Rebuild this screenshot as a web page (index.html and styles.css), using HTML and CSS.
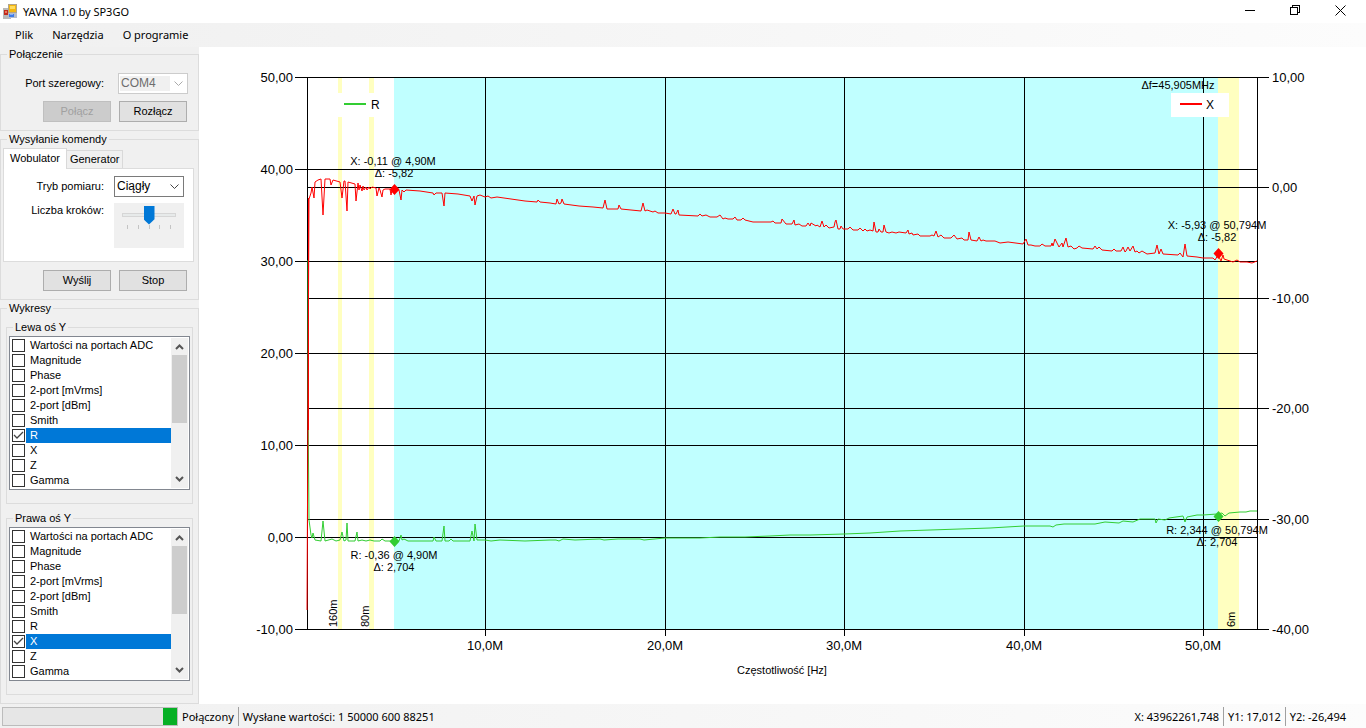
FILE: index.html
```html
<!DOCTYPE html>
<html lang="pl">
<head>
    <meta charset="UTF-8">
    <meta name="viewport" content="width=device-width, initial-scale=1.0">
    <title>YAVNA 1.0 by SP3GO</title>
    <link rel="stylesheet" href="styles.css">
</head>
<body>
    <header class="titlebar">
        <svg class="app-icon" width="16" height="16" viewBox="0 0 16 16">
            <rect x="0" y="4" width="8" height="11" fill="#b9b9b9"/>
            <rect x="1" y="6" width="5" height="5" fill="#c22a1b"/>
            <rect x="2" y="7" width="2" height="2" fill="#e8765f"/>
            <rect x="5" y="0" width="9" height="10" fill="#b0a48c"/>
            <rect x="6" y="1" width="7" height="7" fill="#f5b70f"/>
            <rect x="7" y="2" width="5" height="3" fill="#ffdc5e"/>
            <rect x="5" y="9" width="9" height="5" fill="#b5bccb"/>
            <rect x="6" y="10" width="5" height="3" fill="#3f7be8"/>
            <rect x="7" y="10" width="3" height="1" fill="#86aff5"/>
        </svg>
        <span class="title">YAVNA 1.0 by SP3GO</span>
        <div class="window-buttons">
            <button type="button" aria-label="Minimalizuj"><svg width="11" height="11"><path d="M0 5.5h10"/></svg></button>
            <button type="button" aria-label="Przywróć"><svg width="11" height="11"><path d="M0.5 2.5h7v7h-7zM2.5 2.5v-2h7v7h-2"/></svg></button>
            <button type="button" aria-label="Zamknij"><svg width="11" height="11"><path class="smooth" d="M0.5 0.5l10 10M10.5 0.5l-10 10"/></svg></button>
        </div>
    </header>
    <nav class="menu">
        <a href="#">Plik</a>
        <a href="#">Narzędzia</a>
        <a href="#">O programie</a>
    </nav>
    <div class="container">
        <aside>
            <fieldset class="connection">
                <legend>Połączenie</legend>
                <div class="row">
                    <label for="port">Port szeregowy:</label>
                    <span class="combo disabled">
                        <select id="port" disabled><option>COM4</option></select>
                        <svg width="9" height="6"><path d="M0.5 0.5l4 4 4-4"/></svg>
                    </span>
                </div>
                <div class="buttons">
                    <button type="button" class="btn" disabled>Połącz</button>
                    <button type="button" class="btn">Rozłącz</button>
                </div>
            </fieldset>

            <fieldset class="command">
                <legend>Wysyłanie komendy</legend>
                <div class="tabs" role="tablist">
                    <button type="button" class="tab active" role="tab" aria-selected="true">Wobulator</button>
                    <button type="button" class="tab" role="tab" aria-selected="false">Generator</button>
                </div>
                <div class="tab-page" role="tabpanel">
                    <div class="row">
                        <label for="mode">Tryb pomiaru:</label>
                        <span class="combo">
                            <select id="mode"><option>Ciągły</option></select>
                            <svg width="9" height="6"><path d="M0.5 0.5l4 4 4-4"/></svg>
                        </span>
                    </div>
                    <div class="row top">
                        <label for="steps">Liczba kroków:</label>
                        <div class="trackbar">
                            <input type="range" id="steps" min="0" max="4" value="2">
                            <div class="ticks"><i></i><i></i><i></i><i></i><i></i></div>
                        </div>
                    </div>
                </div>
                <div class="buttons">
                    <button type="button" class="btn">Wyślij</button>
                    <button type="button" class="btn">Stop</button>
                </div>
            </fieldset>

            <fieldset class="charts">
                <legend>Wykresy</legend>
                <fieldset class="axis">
                    <legend>Lewa oś Y</legend>
                    <div class="listbox">
                        <div class="items">
                            <label><input type="checkbox"><span>Wartości na portach ADC</span></label>
                            <label><input type="checkbox"><span>Magnitude</span></label>
                            <label><input type="checkbox"><span>Phase</span></label>
                            <label><input type="checkbox"><span>2-port [mVrms]</span></label>
                            <label><input type="checkbox"><span>2-port [dBm]</span></label>
                            <label><input type="checkbox"><span>Smith</span></label>
                            <label class="selected"><input type="checkbox" checked><span>R</span></label>
                            <label><input type="checkbox"><span>X</span></label>
                            <label><input type="checkbox"><span>Z</span></label>
                            <label><input type="checkbox"><span>Gamma</span></label>
                        </div>
                        <div class="scroll">
                            <svg width="9" height="6"><path d="M1 5l3.500-3.500L8 5"/></svg>
                            <div class="thumb"></div>
                            <svg width="9" height="6"><path d="M1 1l3.500 3.500L8 1"/></svg>
                        </div>
                    </div>
                </fieldset>
                <fieldset class="axis">
                    <legend>Prawa oś Y</legend>
                    <div class="listbox">
                        <div class="items">
                            <label><input type="checkbox"><span>Wartości na portach ADC</span></label>
                            <label><input type="checkbox"><span>Magnitude</span></label>
                            <label><input type="checkbox"><span>Phase</span></label>
                            <label><input type="checkbox"><span>2-port [mVrms]</span></label>
                            <label><input type="checkbox"><span>2-port [dBm]</span></label>
                            <label><input type="checkbox"><span>Smith</span></label>
                            <label><input type="checkbox"><span>R</span></label>
                            <label class="selected"><input type="checkbox" checked><span>X</span></label>
                            <label><input type="checkbox"><span>Z</span></label>
                            <label><input type="checkbox"><span>Gamma</span></label>
                        </div>
                        <div class="scroll">
                            <svg width="9" height="6"><path d="M1 5l3.500-3.500L8 5"/></svg>
                            <div class="thumb"></div>
                            <svg width="9" height="6"><path d="M1 1l3.500 3.500L8 1"/></svg>
                        </div>
                    </div>
                </fieldset>
            </fieldset>
        </aside>

        <main>
            <svg class="chart" viewBox="199 47 1167 656">
                <!-- amateur bands and the range between markers -->
                <g class="bands">
                    <rect class="ham" x="338" y="78" width="4" height="551"/>
                    <rect class="ham" x="369" y="78" width="5" height="551"/>
                    <rect class="range" x="394" y="78" width="824" height="551"/>
                    <rect class="ham" x="1218" y="78" width="21" height="551"/>
                </g>
                <g class="grid">
                    <path d="M307.500 77V630M485.500 77V636M665.500 77V636M844.500 77V636M1024.500 77V636M1203.500 77V636M1257.500 77V630"/>
                    <path d="M295 77.500H1269M295 169.500H1258M295 261.500H1258M295 353.500H1258M295 445.500H1258M295 537.500H1258M295 629.500H1269"/>
                    <path d="M307 187.500H1269M307 298.500H1269M307 408.500H1269M307 519.500H1269"/>
                </g>
                <!-- R -->
                <polyline class="line-r" points="308,260 308,400 309,520 311,535 312,538 313,533 315,540 321,541 323,521 325,541 332,539 336,541 340,540 342,532 344,541 346,540 347,523 348,541 355,541 357,532 358,541 362,540 366,541 370,540 374,541 380,541 382,539 385,541 392,541 399,541 401,535 402,540 404,539 408,541 433,541 434,537 436,541 442,541 444,526 445,541 449,541 451,539 453,541 470,541 472,531 474,541 475,524 477,540 485,540 491,541 500,540 525,541 550,540 556,540 559,541 563,539 575,540 600,539 604,540 618,539 640,539 644,540 665,538 700,538 720,537 745,537 770,536 790,535 810,535 844,534 870,533 900,531 930,530 960,529 990,528 1024,526 1050,526 1053,527 1056,525 1064,524 1080,524 1095,524 1105,522 1119,523 1123,521 1133,522 1140,519 1155,519 1156,523 1158,519 1165,520 1169,518 1183,516 1185,522 1187,517 1197,515 1203,515 1217,514 1222,513 1225,516 1229,513 1240,512 1246,512 1250,511 1257,511"/>
                <!-- X -->
                <path class="line-x edge" d="M308.500 198V430"/>
                <polyline class="line-x" points="307,610 308,400 309,199 311,193 312,187 314,198 315,182 318,180 321,179 323,215 325,179 330,179 331,185 333,180 340,182 342,198 344,181 345,181 347,211 348,182 355,184 356,201 358,183 359,190 360,185 362,191 363,186 364,190 366,187 367,190 369,187 370,189 372,187 376,188 377,196 379,188 380,190 382,197 383,190 385,189 390,189 391,195 392,190 394,189 399,190 401,200 402,190 404,192 406,190 420,191 433,193 434,195 436,193 442,193 444,206 445,193 458,194 470,196 472,201 474,196 475,205 477,196 480,195 485,197 488,196 491,198 497,197 511,199 525,201 537,202 538,200 540,202 550,203 556,204 557,199 559,204 561,203 562,199 564,204 579,206 593,207 603,208 605,200 607,209 618,209 619,205 621,209 641,211 643,203 645,211 647,210 653,212 655,211 658,213 665,213 671,214 673,209 675,214 676,214 678,210 679,215 698,216 700,214 702,216 706,215 710,217 717,217 720,215 723,219 725,218 728,219 733,219 735,217 737,220 741,220 743,218 745,220 753,222 771,222 773,221 775,223 781,223 782,219 786,224 792,224 794,220 795,225 799,224 802,226 806,226 808,223 810,226 811,223 816,226 817,225 820,227 822,221 824,227 826,225 829,228 834,227 835,222 836,220 838,229 840,229 841,226 843,229 848,229 850,227 853,230 858,230 860,228 863,231 865,229 867,231 870,230 873,231 874,222 876,232 878,232 879,229 881,232 883,232 884,225 886,232 889,233 892,232 896,233 899,232 906,233 908,230 909,234 912,233 913,235 918,234 920,236 930,236 932,235 934,236 936,231 938,237 941,235 944,238 951,238 954,235 957,239 962,238 964,240 968,240 969,232 971,240 977,241 979,237 981,241 983,240 986,241 995,241 1000,243 1008,242 1023,244 1026,239 1028,245 1031,245 1035,246 1040,246 1042,244 1045,246 1051,246 1052,243 1053,246 1055,239 1059,247 1062,243 1063,247 1066,238 1068,247 1071,246 1074,249 1077,248 1079,246 1082,248 1093,249 1095,246 1097,249 1099,247 1102,250 1112,251 1114,249 1116,251 1121,251 1123,247 1125,252 1126,251 1128,247 1130,251 1133,246 1135,252 1137,251 1139,253 1142,251 1147,254 1155,253 1157,245 1159,254 1161,249 1163,254 1178,255 1180,253 1183,257 1185,244 1187,256 1197,257 1203,258 1213,258 1215,260 1218,255 1221,261 1223,255 1224,259 1230,261 1233,262 1237,260 1240,262 1247,262 1252,263 1257,261"/>
                <!-- markers -->
                <path class="marker-r" d="M394.500 536l5 5.500-5 5.500-5-5.500zM1218.500 511l5 5.500-5 5.500-5-5.500z"/>
                <path class="marker-x" d="M394.500 184l5 5.500-5 5.500-5-5.500zM1218.500 248l5 5.500-5 5.500-5-5.500z"/>
                <g class="legend-box">
                    <rect x="335" y="93" width="58" height="24"/>
                    <path class="key-r" d="M344 104h22"/>
                    <text x="371" y="109">R</text>
                    <rect x="1171" y="93" width="58" height="24"/>
                    <path class="key-x" d="M1180 104h22"/>
                    <text x="1206" y="109">X</text>
                </g>
                <g class="axis-text end">
                    <text x="293" y="82">50,00</text>
                    <text x="293" y="174">40,00</text>
                    <text x="293" y="266">30,00</text>
                    <text x="293" y="358">20,00</text>
                    <text x="293" y="450">10,00</text>
                    <text x="293" y="542">0,00</text>
                    <text x="293" y="634">-10,00</text>
                </g>
                <g class="axis-text">
                    <text x="1272" y="82">10,00</text>
                    <text x="1272" y="192">0,00</text>
                    <text x="1272" y="303">-10,00</text>
                    <text x="1272" y="413">-20,00</text>
                    <text x="1272" y="524">-30,00</text>
                    <text x="1272" y="634">-40,00</text>
                </g>
                <g class="axis-text middle">
                    <text x="485" y="650">10,0M</text>
                    <text x="665" y="650">20,0M</text>
                    <text x="844" y="650">30,0M</text>
                    <text x="1024" y="650">40,0M</text>
                    <text x="1203" y="650">50,0M</text>
                </g>
                <g class="note middle">
                    <text x="782" y="674">Częstotliwość [Hz]</text>
                    <text x="1178" y="89">Δf=45,905MHz</text>
                    <text x="393" y="165">X: -0,11 @ 4,90M</text>
                    <text x="394" y="177">Δ: -5,82</text>
                    <text x="394" y="559">R: -0,36 @ 4,90M</text>
                    <text x="394" y="571">Δ: 2,704</text>
                    <text x="1217" y="229">X: -5,93 @ 50,794M</text>
                    <text x="1217" y="241">Δ: -5,82</text>
                    <text x="1217" y="534">R: 2,344 @ 50,794M</text>
                    <text x="1217" y="546">Δ: 2,704</text>
                </g>
                <g class="note">
                    <text transform="translate(337 627) rotate(-90)">160m</text>
                    <text transform="translate(369 627) rotate(-90)">80m</text>
                    <text transform="translate(1235 627) rotate(-90)">6m</text>
                </g>
            </svg>
        </main>
    </div>
    <footer class="statusbar">
        <div class="progress" role="progressbar" aria-label="Połączenie"><div class="chunk"></div></div>
        <span class="state">Połączony</span>
        <span class="sent">Wysłane wartości: 1 50000 600 88251</span>
        <span class="pos">X: 43962261,748</span>
        <span class="pos">Y1: 17,012</span>
        <span class="pos">Y2: -26,494</span>
    </footer>
</body>
</html>
```
FILE: styles.css
```css
* {
    box-sizing: border-box;
}
body {
    margin: 0;
    min-height: 100vh;
    display: flex;
    flex-direction: column;
    background: #fff;
    color: #000;
    font-family: "Liberation Sans", Arial, sans-serif;
    font-size: 11px;
    line-height: 13px;
}
button, select, input {
    font: inherit;
    color: inherit;
    margin: 0;
}

/* title bar and menu */
.titlebar {
    display: flex;
    align-items: center;
    height: 23px;
    padding: 0 3px;
    font-family: "Noto Sans", sans-serif;
}
.title {
    margin-left: 4px;
}
.window-buttons {
    display: flex;
    margin-left: auto;
}
.window-buttons button {
    display: flex;
    align-items: center;
    justify-content: center;
    width: 45px;
    height: 22px;
    padding: 0 0 2px;
    border: none;
    background: none;
}
.window-buttons path {
    fill: none;
    stroke: #000;
    shape-rendering: crispEdges;
}
.window-buttons .smooth {
    shape-rendering: auto;
}
.menu {
    display: flex;
    align-items: center;
    gap: 19px;
    height: 24px;
    padding: 0 0 2px 15px;
    background: linear-gradient(to right, #f0f0f0, #fcfcfc);
    font-family: "Noto Sans", sans-serif;
}
.menu a {
    color: #000;
    text-decoration: none;
}

.container {
    display: flex;
    flex: 1;
}
aside {
    flex: 0 0 199px;
    display: flex;
    flex-direction: column;
    padding-top: 1px;
    background: #f0f0f0;
}
fieldset {
    min-width: 0;
    margin: 0;
    border: 1px solid #dcdcdc;
}
legend {
    margin-left: 4px;
    padding: 0 2px;
}

/* left panel */
.connection {
    padding: 12px 10px 8px;
}
.connection legend {
    margin-left: -4px;
}
.command {
    margin-top: 2px;
    padding: 2px 4px 8px 2px;
}
.charts {
    flex: 1;
    margin-top: 2px;
    padding: 6px 5px 5px;
}
.charts > legend {
    margin-left: 1px;
}
.row {
    display: flex;
    align-items: center;
    justify-content: flex-end;
    gap: 10px;
}
.connection .row {
    gap: 14px;
}
.row.top {
    align-items: flex-start;
    margin-top: 6px;
}
.combo {
    display: flex;
    align-items: center;
    width: 70px;
    height: 21px;
    padding: 0 4px 0 1px;
    border: 1px solid #7a7a7a;
    background: #fff;
}
.combo select {
    flex: 1;
    min-width: 0;
    height: 15px;
    padding: 0 1px;
    border: none;
    background: none;
    appearance: none;
    font-size: 12px;
}
.combo svg {
    margin-left: 4px;
}
.combo path {
    fill: none;
    stroke: #444;
}
.combo.disabled {
    border-color: #ccc;
}
.combo.disabled select {
    background: #f0f0f0;
    color: #6d6d6d;
    opacity: 1;
}
.combo.disabled path {
    stroke: #aaa;
}
.buttons {
    display: flex;
    justify-content: flex-end;
    gap: 8px;
    margin-top: 7px;
    padding-right: 1px;
}
.btn {
    width: 68px;
    height: 21px;
    padding: 0;
    border: 1px solid #adadad;
    background: #e1e1e1;
}
.btn:disabled {
    border-color: #bfbfbf;
    background: #ccc;
    color: #a0a0a0;
}
.tabs {
    display: flex;
    align-items: flex-end;
}
.tab {
    height: 18px;
    padding: 0 3px;
    border: 1px solid #d9d9d9;
    border-left: none;
    border-bottom: none;
    background: #f0f0f0;
}
.tab.active {
    height: 21px;
    margin-bottom: -1px;
    padding: 0 6px 1px;
    border-left: 1px solid #d9d9d9;
    background: #fff;
    z-index: 1;
}
.tab-page {
    height: 94px;
    padding: 7px 9px;
    border: 1px solid #dcdcdc;
    background: #fff;
}
.command .buttons {
    margin-top: 8px;
    padding-right: 7px;
}
.command .row.top label {
    margin-top: 1px;
}
.trackbar {
    width: 70px;
    height: 45px;
    padding: 2px 8px;
    background: #f0f0f0;
}
.trackbar input {
    display: block;
    width: 100%;
    height: 19px;
    background: none;
    appearance: none;
}
.trackbar input::-webkit-slider-runnable-track {
    height: 4px;
    border: 1px solid #d6d6d6;
    background: #e7eaea;
}
.trackbar input::-webkit-slider-thumb {
    width: 11px;
    height: 19px;
    margin-top: -8px;
    appearance: none;
    background: #0078d7;
    clip-path: polygon(0 0, 100% 0, 100% 72%, 50% 100%, 0 72%);
}
.ticks {
    display: flex;
    justify-content: space-between;
    margin-top: 1px;
    padding: 0 5px;
}
.ticks i {
    width: 1px;
    height: 4px;
    background: #c4c4c4;
}

/* checked lists */
.axis {
    padding: 2px 2px 13px;
}
.axis + .axis {
    margin-top: 8px;
}
.listbox {
    display: flex;
    height: 154px;
    padding: 1px;
    border: 1px solid #828790;
    background: #fff;
}
.items {
    flex: 1;
}
.items label {
    display: flex;
    align-items: center;
    height: 15px;
}
.items span {
    flex: 1;
    padding-left: 4px;
    line-height: 15px;
    white-space: nowrap;
}
.items .selected span {
    background: #0078d7;
    color: #fff;
}
.items input {
    width: 13px;
    height: 13px;
    margin: 0 1px;
    border: 1px solid #333;
    background: #fff;
    appearance: none;
}
.items input:checked {
    background: url("data:image/svg+xml,%3Csvg xmlns='http://www.w3.org/2000/svg' width='11' height='11'%3E%3Cpath d='M1 5l3 3 6-6' fill='none' stroke='%23444' stroke-width='1.300'/%3E%3C/svg%3E");
}
.scroll {
    display: flex;
    flex-direction: column;
    align-items: center;
    width: 17px;
    padding: 6px 1px;
    background: #f0f0f0;
}
.scroll path {
    fill: none;
    stroke: #555;
    stroke-width: 2;
}
.scroll .thumb {
    width: 100%;
    height: 68px;
    margin: 5px 0 auto;
    background: #cdcdcd;
}

/* chart */
main {
    flex: 1;
    min-width: 0;
}
.chart {
    display: block;
    width: 100%;
}
.ham {
    fill: #ffffc0;
}
.range {
    fill: #c0ffff;
}
.grid path {
    stroke: #000;
    shape-rendering: crispEdges;
}
.line-r, .line-x {
    fill: none;
    stroke: #32cd32;
}
.line-x {
    stroke: #f00;
}
.marker-r {
    fill: #32cd32;
}
.marker-x {
    fill: #f00;
}
.legend-box rect {
    fill: #fff;
}
.key-r, .key-x {
    stroke: #32cd32;
    stroke-width: 2;
}
.key-x {
    stroke: #f00;
}
.axis-text {
    font-size: 13px;
}
.legend-box text {
    font-size: 12px;
}
.note {
    font-size: 11px;
}
.middle {
    text-anchor: middle;
}
.end {
    text-anchor: end;
}

/* status bar */
.statusbar {
    display: flex;
    align-items: center;
    height: 24px;
    padding: 0 20px 0 2px;
    background: linear-gradient(to right, #f0f0f0, #fcfcfc);
    font-family: "Noto Sans", sans-serif;
}
.progress {
    display: flex;
    justify-content: flex-end;
    width: 176px;
    height: 19px;
    border: 1px solid #bcbcbc;
    background: #e6e6e6;
}
.chunk {
    width: 14px;
    background: #06b025;
}
.state {
    margin-left: 4px;
}
.sent, .pos + .pos {
    margin-left: 4px;
    padding: 3px 0 3px 4px;
    border-left: 1px solid #a0a0a0;
}
.sent {
    margin-right: auto;
}
```
